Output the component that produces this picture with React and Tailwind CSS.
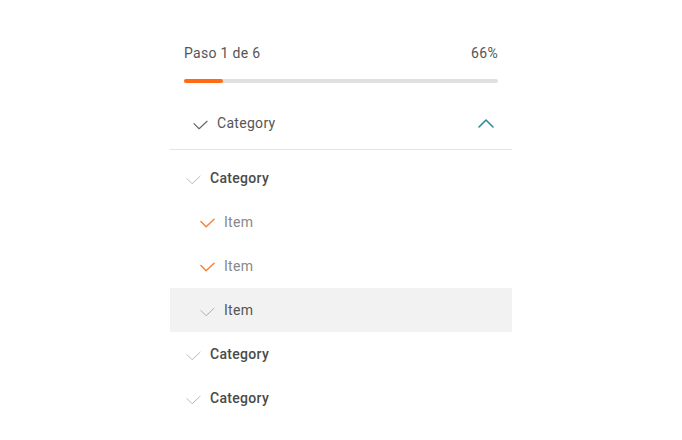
import { useState } from "react";

function Check({ className = "", strokeWidth = 1.2 }) {
  return (
    <svg
      viewBox="0 0 16 10"
      width="15"
      height="10"
      fill="none"
      stroke="currentColor"
      strokeWidth={strokeWidth}
      strokeLinecap="round"
      strokeLinejoin="round"
      className={className}
    >
      <polyline points="1,3.5 6.5,9 15,1" />
    </svg>
  );
}

function ChevronUp() {
  return (
    <svg
      viewBox="0 0 16 10"
      width="16"
      height="10"
      fill="none"
      stroke="currentColor"
      strokeWidth="1.6"
      strokeLinecap="round"
      strokeLinejoin="round"
      className="text-[#2f8b9c]"
    >
      <polyline points="1,9 8,2 15,9" />
    </svg>
  );
}

const rows = [
  { type: "category", label: "Category" },
  { type: "item", label: "Item", done: true },
  { type: "item", label: "Item", done: true },
  { type: "item", label: "Item", done: false, active: true },
  { type: "category", label: "Category" },
  { type: "category", label: "Category" },
];

export default function App() {
  const [open, setOpen] = useState(true);
  const progress = 12.5;

  return (
    <div
      className="min-h-screen bg-white pt-[44px] pl-[170px] tracking-[0.3px]"
      style={{ fontFamily: "Roboto, 'Noto Sans', sans-serif" }}
    >
      <div className="w-[342px]">
        <div className="flex justify-between px-[14px] text-[14px] leading-[18px] text-[#555]">
          <span>Paso 1 de 6</span>
          <span>66%</span>
        </div>
        <div className="mx-[14px] mt-[17px] h-[4px] rounded-full bg-[#e0e0e0]">
          <div
            className="h-full rounded-full bg-[#ff6a13]"
            style={{ width: `${progress}%` }}
          />
        </div>

        <button
          onClick={() => setOpen(!open)}
          className="mt-[18px] flex h-[49px] w-full items-center border-b border-[#e3e3e3] pb-[4px] pl-[23px] pr-[18px] text-left"
        >
          <Check className="mt-[3px] text-[#666]" />
          <span className="ml-[9px] flex-1 text-[14px] text-[#555]">Category</span>
          <ChevronUp />
        </button>

        {open && (
          <div className="pt-[6px]">
            {rows.map((r, i) =>
              r.type === "category" ? (
                <div key={i} className="flex h-[44px] items-center pl-[16px]">
                  <Check className="mt-[3px] text-[#b5b5b5]" strokeWidth={1} />
                  <span className="ml-[9px] text-[14px] font-medium text-[#4a4a4a]">
                    {r.label}
                  </span>
                </div>
              ) : (
                <div
                  key={i}
                  className={`flex h-[44px] items-center pl-[30px] ${r.active ? "bg-[#f2f2f2]" : ""}`}
                >
                  {r.done ? (
                    <Check className="mt-[1px] text-[#f58439]" strokeWidth={1.6} />
                  ) : (
                    <Check className="mt-[3px] text-[#aaa]" strokeWidth={1} />
                  )}
                  <span
                    className={`ml-[9px] text-[14px] ${r.active ? "text-[#555]" : "text-[#888]"}`}
                  >
                    {r.label}
                  </span>
                </div>
              )
            )}
          </div>
        )}
      </div>
    </div>
  );
}
